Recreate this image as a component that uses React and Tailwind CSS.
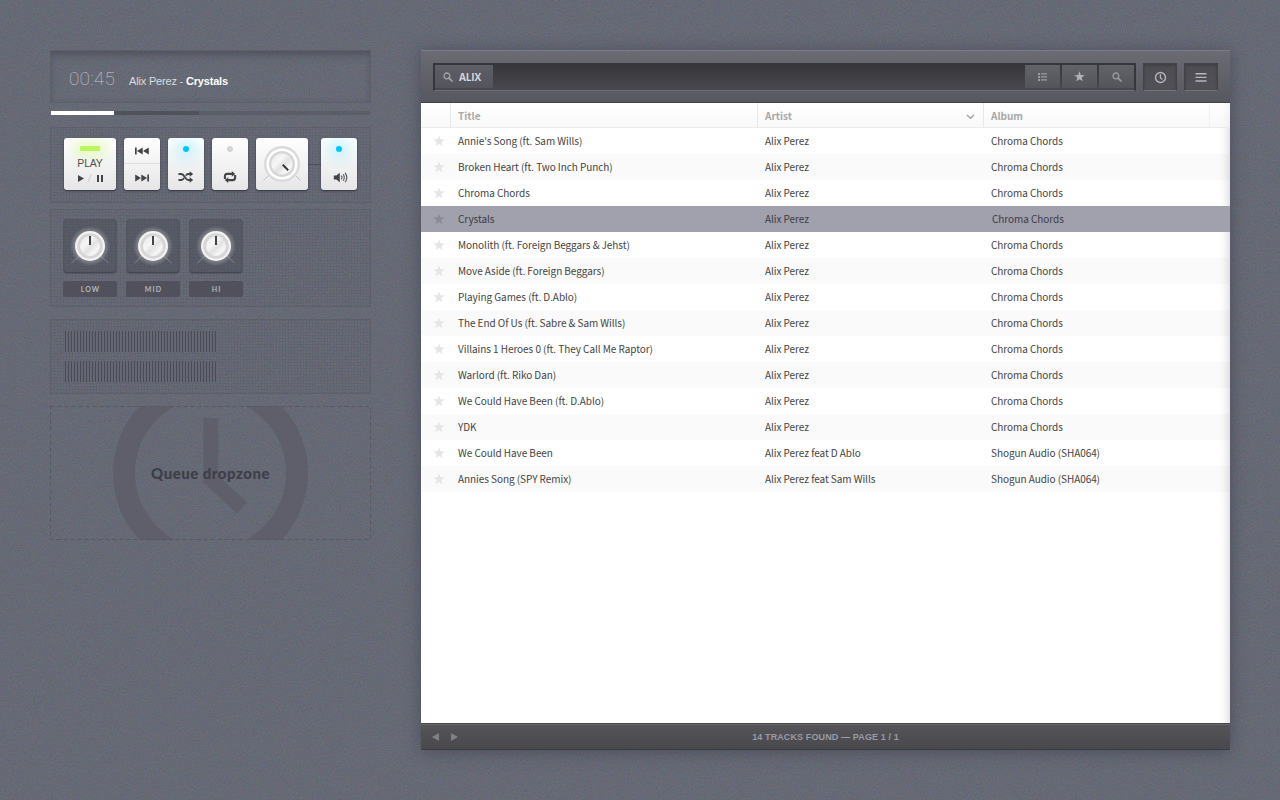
import React from "react";

const tracks = [
  ["Annie's Song (ft. Sam Wills)", "Alix Perez", "Chroma Chords"],
  ["Broken Heart (ft. Two Inch Punch)", "Alix Perez", "Chroma Chords"],
  ["Chroma Chords", "Alix Perez", "Chroma Chords"],
  ["Crystals", "Alix Perez", "Chroma Chords"],
  ["Monolith (ft. Foreign Beggars & Jehst)", "Alix Perez", "Chroma Chords"],
  ["Move Aside (ft. Foreign Beggars)", "Alix Perez", "Chroma Chords"],
  ["Playing Games (ft. D.Ablo)", "Alix Perez", "Chroma Chords"],
  ["The End Of Us (ft. Sabre & Sam Wills)", "Alix Perez", "Chroma Chords"],
  ["Villains 1 Heroes 0 (ft. They Call Me Raptor)", "Alix Perez", "Chroma Chords"],
  ["Warlord (ft. Riko Dan)", "Alix Perez", "Chroma Chords"],
  ["We Could Have Been (ft. D.Ablo)", "Alix Perez", "Chroma Chords"],
  ["YDK", "Alix Perez", "Chroma Chords"],
  ["We Could Have Been", "Alix Perez feat D Ablo", "Shogun Audio (SHA064)"],
  ["Annies Song (SPY Remix)", "Alix Perez feat Sam Wills", "Shogun Audio (SHA064)"],
];
const playing = 3;

const MESH =
  "border border-[#5d5f6b] bg-[repeating-linear-gradient(0deg,rgba(50,50,65,0.08)_0_1px,transparent_1px_3px),repeating-linear-gradient(90deg,rgba(50,50,65,0.08)_0_1px,transparent_1px_3px)]";

function Grain() {
  return (
    <svg className="pointer-events-none absolute inset-0 h-full w-full" aria-hidden="true">
      <filter id="grain" x="0" y="0" width="100%" height="100%" colorInterpolationFilters="sRGB">
        <feTurbulence type="fractalNoise" baseFrequency="0.75" numOctaves="2" seed="4" />
        <feColorMatrix values="1.8 0 0 0 -0.5  0 1.8 0 0 -0.48  0 0 1.8 0 -0.42  0 0 0 0 0.075" />
      </filter>
      <rect width="100%" height="100%" filter="url(#grain)" />
    </svg>
  );
}

function Star({ className, size = 12 }) {
  return (
    <svg className={className} width={size} height={size} viewBox="0 0 12 12" fill="currentColor">
      <path d="M6 .4 7.45 4.3 11.7 4.5 8.4 7.1 9.5 11.2 6 8.9 2.5 11.2 3.6 7.1 .3 4.5 4.55 4.3Z" />
    </svg>
  );
}

function Search({ className }) {
  return (
    <svg className={className} width="10" height="10" viewBox="0 0 10 10" fill="none" stroke="currentColor">
      <circle cx="3.9" cy="3.9" r="2.9" strokeWidth="1.3" />
      <path d="M6.1 6.1 9 9" strokeWidth="1.7" strokeLinecap="round" />
    </svg>
  );
}

const KEY =
  "flex h-[52px] shrink-0 flex-col items-center rounded-[3px] bg-linear-to-b from-white to-[#e6e6e8] shadow-[0_1px_1px_0px_rgba(50,50,60,0.7),0_1px_3px_rgba(40,40,50,0.4)]";

function Knob({ id, size, angle, small }) {
  return (
    <svg width={size} height={size} viewBox="-26 -26 52 52" className="block shrink-0">
      <defs>
        <radialGradient id={id + "g"}>
          <stop offset="0.7" stopColor="#fff" stopOpacity="0.28" />
          <stop offset="0.88" stopColor="#fff" stopOpacity="0.12" />
          <stop offset="1" stopColor="#fff" stopOpacity="0" />
        </radialGradient>
        <linearGradient id={id + "f"} x1="0" y1="0" x2="1" y2="1">
          <stop offset="0" stopColor="#e6e6e6" />
          <stop offset="0.35" stopColor="#f6f6f6" />
          <stop offset="0.55" stopColor="#e2e2e2" />
          <stop offset="0.75" stopColor="#f6f6f6" />
          <stop offset="1" stopColor="#e4e4e4" />
        </linearGradient>
      </defs>
      {small ? (
        <g>
          <path d="M-18.5 17 -11 10M18.5 17 11 10" stroke="#82848e" strokeWidth="1" />
          <circle r="20" fill={"url(#" + id + "g)"} />
          <circle r="15" fill="#f3f3f3" />
          <circle r="12.8" fill="#d6d6d6" />
          <circle r="10" fill={"url(#" + id + "f)"} />
          <path d="M0-10V-1" stroke="#444448" strokeWidth="2" />
        </g>
      ) : (
        <g>
          <path d="M-18.5 16.5 -12 10M18.5 16.5 12 10" stroke="#c2c2c4" strokeWidth="1" />
          <circle r="18" fill="#dadadb" />
          <circle r="15.6" fill="#fff" />
          <circle r="13" fill="#d6d6d7" />
          <circle r="10.6" fill={"url(#" + id + "f)"} />
          <path transform={"rotate(" + angle + ")"} d="M0-8.8V-1" stroke="#333336" strokeWidth="1.9" />
        </g>
      )}
    </svg>
  );
}

function Led({ on }) {
  return on ? (
    <div className="mt-2 h-1.5 w-1.5 shrink-0 rounded-full bg-[#00c6ff] shadow-[0_0_14px_8px_rgba(90,225,255,0.28)]" />
  ) : (
    <div className="mt-2 h-1.5 w-1.5 shrink-0 rounded-full bg-[#d5d5d7]" />
  );
}

function Transport() {
  return (
    <section className={MESH + " mt-3 flex h-[76px] w-[321px] pt-2.5 pl-[13px]"}>
      <div className={KEY + " w-[52px] overflow-hidden"}>
        <div className="mt-2 h-[5px] w-5 shrink-0 rounded-[1px] bg-[#bdf560] shadow-[0_0_10px_6px_rgba(200,250,110,0.32)]" />
        <div className="mt-[6px] text-[10.5px] leading-3 tracking-[-0.2px] text-[#505050] font-['Liberation_Sans',sans-serif]">PLAY</div>
        <svg className="mt-[4px]" width="28" height="10" viewBox="0 0 28 10">
          <path d="M2 2v7l6-3.5z" fill="#444" />
          <path d="M12 9 15 2" stroke="#ccc" />
          <path d="M21 2h2v7h-2zM25 2h2v7h-2z" fill="#444" />
        </svg>
      </div>
      <div className={KEY + " ml-2 w-9"}>
        <div className="flex h-[26px] w-full items-center justify-center border-b border-[#dedee0]">
          <svg width="14" height="8" viewBox="0 0 14 8" fill="#444">
            <path d="M0 .5h1.7v7H0zM7.7.5v7L1.9 4zM13.8.5v7L8 4z" />
          </svg>
        </div>
        <div className="flex h-[26px] w-full items-center justify-center pt-px">
          <svg width="14" height="8" viewBox="0 0 14 8" fill="#444">
            <path d="M12.3.5H14v7h-1.7zM6.3.5v7L12.1 4zM.2.5v7L6 4z" />
          </svg>
        </div>
      </div>
      <div className={KEY + " ml-2 w-9 overflow-hidden"}>
        <Led on />
        <svg className="mt-[19px] shrink-0" width="16" height="12" viewBox="0 0 16 12" fill="none" stroke="#444" strokeWidth="1.8">
          <path d="M.5 3H3.3C6.6 3 7 9 10.2 9H12.5M.5 9H3.3C4.6 9 5.4 8 6 7M7.8 4.6C8.4 3.6 9 3 10.2 3H12.5" />
          <path d="M11.7.3 15.2 3 11.7 5.7zM11.7 6.3 15.2 9 11.7 11.7z" fill="#444" stroke="none" />
        </svg>
      </div>
      <div className={KEY + " ml-2 w-9"}>
        <Led />
        <svg className="mt-[19px] shrink-0" width="14" height="12" viewBox="0 0 14 12" fill="none" stroke="#444" strokeWidth="2.1">
          <path d="M1.9 8V5.3Q1.9 2.9 4.3 2.9H9.4M12.1 4V6.7Q12.1 9.1 9.7 9.1H4.6" />
          <path d="M8.8 0 12.2 2.9 8.8 5.8zM5.2 6.2 1.8 9.1 5.2 12z" fill="#444" stroke="none" />
        </svg>
      </div>
      <div className={KEY + " ml-2 w-[52px]"}>
        <Knob id="master" size={52} angle={135} />
      </div>
      <div className="mt-[26px] h-px w-[13px] shrink-0 bg-[#4d4f5a]" />
      <div className={KEY + " w-9 overflow-hidden"}>
        <Led on />
        <svg className="mt-[20px] ml-[3px] shrink-0" width="16" height="11" viewBox="0 0 16 11" fill="none" stroke="#555">
          <path d="M.8 3.4h2.5L6.8.8v9.4L3.3 7.6H.8z" fill="#444" stroke="none" />
          <path d="M8.3 3.6Q9.6 5.5 8.3 7.4M10.2 2.2Q12.4 5.5 10.2 8.8M12.1.8Q15.6 5.5 12.1 10.2" strokeWidth="1.1" />
        </svg>
      </div>
    </section>
  );
}

function Equalizer() {
  return (
    <section className={MESH + " mt-1.5 flex h-[98px] w-[321px] gap-[9px] pt-[9px] pl-3"}>
      {["LOW", "MID", "HI"].map((b) => (
        <div key={b} className="w-[54px]">
          <div className="flex h-[55px] justify-center rounded-[4px] border border-[#50525c]/50 bg-[#40414b]/35 shadow-[inset_0_-1px_1px_rgba(45,45,55,0.4)]">
            <Knob id={b} size={52} small />
          </div>
          <div className="mt-[7px] flex h-4 items-center justify-center rounded-[2px] bg-[#50515c] pl-px text-[7px] font-bold tracking-[1.1px] text-[#b4b5bb] font-['Lato',sans-serif]">
            {b}
          </div>
        </div>
      ))}
    </section>
  );
}

function Meters() {
  return (
    <section className={MESH + " mt-3 flex h-[75px] w-[321px] flex-col gap-[9px] pt-[11px] pl-3.5"}>
      <div className="h-[21px] w-[152px] bg-[repeating-linear-gradient(90deg,#484a55_0_1px,#656874_1px_3px)]" />
      <div className="h-[21px] w-[152px] bg-[repeating-linear-gradient(90deg,#484a55_0_1px,#656874_1px_3px)]" />
    </section>
  );
}

function Dropzone() {
  return (
    <section className="relative mt-3 h-[134px] w-[321px] overflow-hidden">
      <svg className="absolute inset-0" width="321" height="134" viewBox="0 0 321 134" fill="none">
        <circle cx="160.5" cy="67" r="86.5" stroke="#5e5f6b" strokeWidth="22" />
        <path d="M160.8 12V73L192 102" stroke="#5e5f6b" strokeWidth="15" />
        <rect x="0.5" y="0.5" width="320" height="133" stroke="#565863" strokeDasharray="4 3" />
      </svg>
      <div className="relative flex h-full items-center justify-center text-[15px] font-black tracking-[0.5px] text-[#3d3e47] font-['Lato',sans-serif]">
        Queue dropzone
      </div>
    </section>
  );
}

const SEG =
  "flex h-[23px] w-[35px] items-center justify-center bg-linear-to-b from-[#626269] to-[#54545b] text-[#9b9ba3]";
const WELL =
  "flex h-7 w-[34px] items-center justify-center border border-[#424248] border-b-[#737379] bg-linear-to-b from-[#4c4c52] to-[#515157] text-[#b5b5bc] shadow-[inset_0_1px_3px_rgba(30,30,35,0.35)]";

function Toolbar() {
  return (
    <div className="flex h-[53px] shrink-0 items-start border-b border-t border-b-[#414147] border-t-[#7b7c86] bg-linear-to-b from-[#6b6b75] to-[#57575f] pt-3 pl-3 font-['Open_Sans',sans-serif]">
      <div className="flex h-7 w-[703px] items-start border-2 border-b border-[#37373b] border-b-[#6d6d74] bg-linear-to-b from-[#37373b] to-[#48484e]">
        <div className="flex h-[23px] w-[58px] items-center bg-linear-to-b from-[#5e5e66] to-[#54545c] pt-px pl-2 text-[10px] font-bold text-[#d6d6da]">
          <Search className="mr-[6px] text-[#a4a4ab]" />
          <span className="tracking-[-0.1px]">ALIX</span>
        </div>
        <div className="ml-auto flex gap-0.5">
          <div className={SEG}>
            <svg width="9" height="8" viewBox="0 0 9 8" fill="currentColor">
              <path d="M0 0h2v2H0zM3 .2h6v1.3H3zM0 3h2v2H0zM3 3.3h6v1.3H3zM0 6h2v2H0zM3 6.3h6v1.3H3z" />
            </svg>
          </div>
          <div className={SEG}><Star className="text-[#b0b0b7]" size={11} /></div>
          <div className={SEG}><Search /></div>
        </div>
      </div>
      <div className={WELL + " ml-[7px]"}>
        <svg width="13" height="13" viewBox="0 0 13 13" fill="none" stroke="currentColor">
          <circle cx="6.5" cy="6.5" r="5" strokeWidth="1.4" />
          <path d="M6.4 3.3V6.7L8.3 8.5" strokeWidth="1.2" />
        </svg>
      </div>
      <div className={WELL + " ml-[7px]"}>
        <svg width="12" height="9" viewBox="0 0 12 9" fill="currentColor">
          <path d="M.5 0h11v1.4H.5zM.5 3.7h11v1.4H.5zM.5 7.3h11v1.4H.5z" />
        </svg>
      </div>
    </div>
  );
}

const COLS = "grid grid-cols-[30px_307px_226px_1fr]";

function Library() {
  return (
    <main className="relative ml-[50px] flex h-[700px] w-[809px] flex-col bg-white shadow-[0_2px_16px_rgba(45,45,60,0.45)]">
      <Toolbar />
      <div className="flex flex-1 flex-col font-['Noto_Sans_CJK_SC',sans-serif] shadow-[inset_-10px_0_10px_-8px_rgba(60,60,70,0.2)]">
        <div className={COLS + " h-[25px] border-b border-[#ebebeb] bg-linear-to-b from-white/60 to-[#f5f5f5]/60 text-[10px] font-bold text-[#a9a9a9]"}>
          <div className="border-r border-[#e8e8e8]" />
          <div className="flex items-center border-r border-[#e8e8e8] pt-px pl-[7px]">Title</div>
          <div className="flex items-center justify-between border-r border-[#e8e8e8] pt-px pr-2 pl-[7px]">
            Artist
            <svg className="mt-0.5" width="9" height="6" viewBox="0 0 9 6" fill="none" stroke="#a5a5a5" strokeWidth="1.5">
              <path d="M1 1 4.5 4.3 8 1" />
            </svg>
          </div>
          <div className="mr-5 flex items-center border-r border-[#f1f1f1] pt-px pl-[7px]">Album</div>
        </div>
        {tracks.map((t, i) => (
          <div
            key={i}
            className={
              COLS + " h-[26px] items-center text-[10px] tracking-[-0.06px] whitespace-nowrap " +
              (i === playing
                ? "bg-[#a1a1ae] text-[#3c3c46]"
                : i % 2
                  ? "bg-[#777777]/4 text-[#444444]"
                  : "text-[#444444]")
            }
          >
            <Star className={"ml-3 " + (i === playing ? "text-[#8a8a98]" : "text-[#e6e6e6]")} />
            <div className="pb-0.5 pl-[7px]">{t[0]}</div>
            <div className="pb-0.5 pl-[7px]">{t[1]}</div>
            <div className={i === playing ? "pb-0.5 pl-2" : "pb-0.5 pl-[7px]"}>{t[2]}</div>
          </div>
        ))}
      </div>
      <footer className="relative flex h-[27px] shrink-0 items-center border-t border-b border-t-[#46464b] border-b-[#3a3a3f] bg-linear-to-b from-[#555559] to-[#48484d] shadow-[inset_0_1px_0_#66666b]">
        <svg className="ml-[11px]" width="27" height="8" viewBox="0 0 27 8" fill="#7f7f87">
          <path d="M7 0v8L0 4zM19 0v8l7-4z" />
        </svg>
        <div className="flex-1 pt-0.5 pr-[38px] text-center text-[9px] font-bold tracking-[0.12px] text-[#9a9aa4] font-['Liberation_Sans',sans-serif]">
          14 TRACKS FOUND — PAGE 1 / 1
        </div>
      </footer>
    </main>
  );
}

export default function App() {
  return (
    <div className="relative flex h-[800px] w-[1280px] overflow-hidden bg-[#666975] pt-[50px] pl-[50px]">
      <Grain />
      <aside className="relative w-[321px]">
        <section className="flex h-[53px] items-center border border-[#5d5f6a] pt-2 pl-[18px] font-['Liberation_Sans',sans-serif] shadow-[inset_0_8px_9px_-4px_rgba(50,50,62,0.36),inset_0_0_5px_rgba(60,60,72,0.2)]">
          <span className="-mt-1 w-[60px] text-[19px] leading-5 font-thin tracking-[0.2px] text-[#c8c9ce] font-['Roboto',sans-serif]">00:45</span>
          <span className="pt-px text-[11px] tracking-[-0.18px] text-[#dcdde1]">
            Alix Perez - <b className="text-white">Crystals</b>
          </span>
        </section>
        <div className="mt-2 ml-px flex h-1 w-[319px] bg-[#5b5d68]">
          <div className="w-[63px] bg-white" />
          <div className="w-[85px] bg-[#50525b]" />
        </div>
        <Transport />
        <Equalizer />
        <Meters />
        <Dropzone />
      </aside>
      <Library />
    </div>
  );
}
